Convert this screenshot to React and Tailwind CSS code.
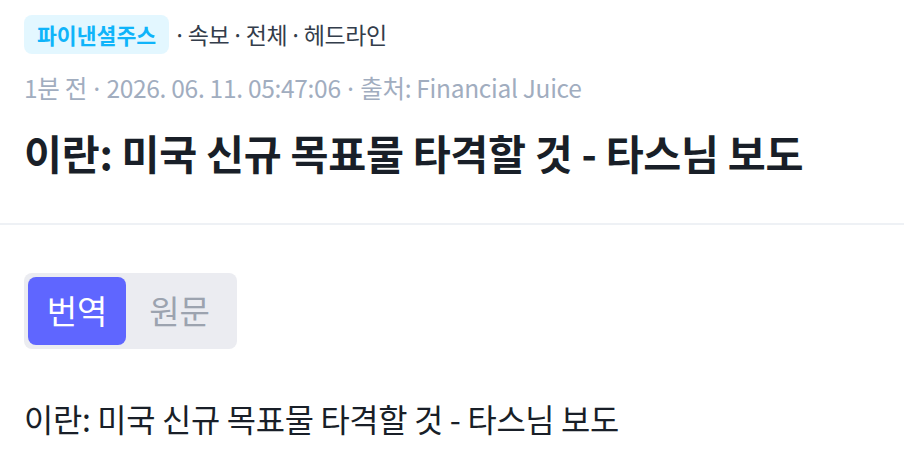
import { useState } from "react";

const font = { fontFamily: '"Noto Sans CJK KR", "Noto Sans", sans-serif' };

const App = () => {
  const [tab, setTab] = useState("ko");
  const text = "이란: 미국 신규 목표물 타격할 것 - 타스님 보도";

  return (
    <div className="w-[904px] h-[468px] bg-white overflow-hidden" style={font}>
      <header className="px-6 pt-[15px] pb-[45px]">
        <div className="flex items-center h-[39px]">
          <span className="px-[13px] h-[39px] flex items-center rounded-lg bg-[#e3f7ff] text-[#0fb4fa] text-[21.6px] font-bold leading-none">
            파이낸셜주스
          </span>
          <span className="ml-[2px] text-[23px] text-[#333d4b] tracking-[-0.4px]">
            <span className="mx-[2px]">·</span>속보<span className="mx-[2px]">·</span>전체<span className="mx-[2px]">·</span>헤드라인
          </span>
        </div>
        <div className="mt-[17px] text-[24.5px] leading-[34px] text-[#a1adbf] tracking-[-0.3px]">
          1분 전<span className="mx-[3px]">·</span>2026. 06. 11. 05:47:06<span className="mx-[3px]">·</span>출처: Financial Juice
        </div>
        <h1 className="mt-[21px] text-[41.3px] leading-[52px] font-bold text-[#191f28] tracking-[-0.3px]">
          {text}
        </h1>
      </header>
      <div className="h-[2px] bg-[#eef1f5]" />
      <section className="px-6 pt-[48px]">
        <div className="inline-flex p-1 rounded-lg bg-[#ebecf1]">
          <button
            onClick={() => setTab("ko")}
            className={
              tab === "ko"
                ? "w-[98px] h-[68px] rounded-lg bg-[#5f66ff] text-white text-[33px]"
                : "w-[98px] h-[68px] rounded-lg text-[#9ca3af] text-[33px]"
            }
          >
            번역
          </button>
          <button
            onClick={() => setTab("en")}
            className={
              tab === "en"
                ? "w-[107px] h-[68px] rounded-lg bg-[#5f66ff] text-white text-[33px]"
                : "w-[107px] h-[68px] rounded-lg text-[#9ca3af] text-[33px]"
            }
          >
            원문
          </button>
        </div>
        <p className="mt-[47px] text-[31.8px] leading-[44px] text-[#191f28] tracking-[-0.3px]">
          {tab === "ko" ? text : "Iran: Will strike new US targets - Tasnim"}
        </p>
      </section>
    </div>
  );
};

export default App;
